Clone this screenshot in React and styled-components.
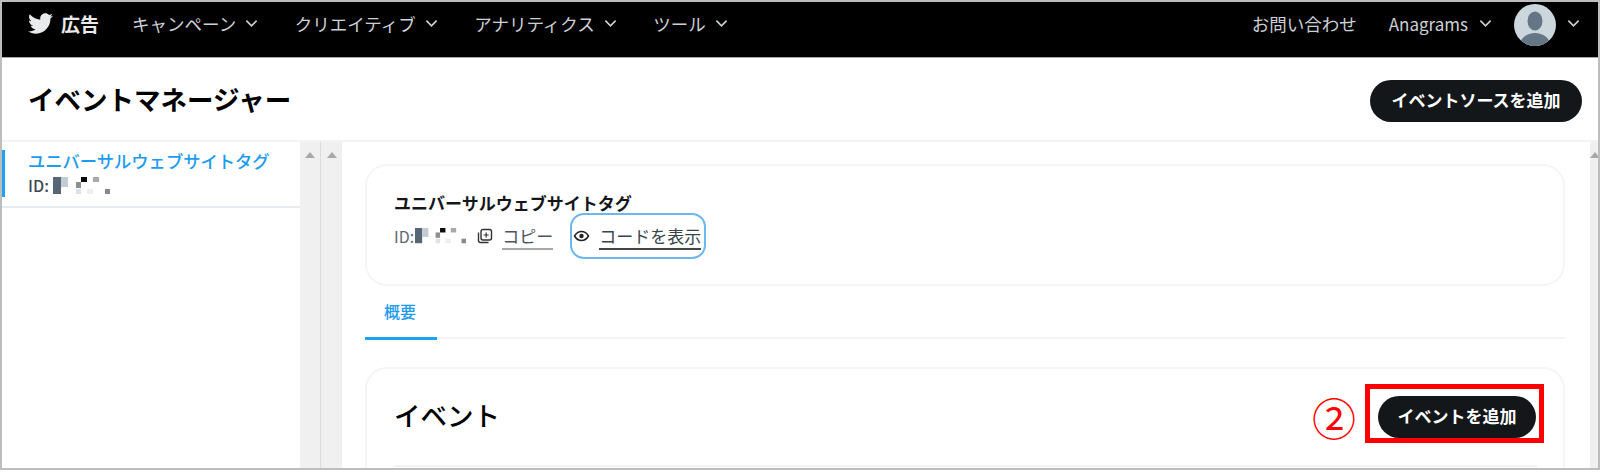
import React from 'react';
import styled, { createGlobalStyle } from 'styled-components';
import { FaTwitter } from 'react-icons/fa';

const GlobalStyle = createGlobalStyle`
  html, body {
    margin: 0;
    background: #fff;
  }
  * {
    box-sizing: border-box;
  }
`;

const Frame = styled.div`
  width: 1600px;
  height: 470px;
  border: 2px solid #bdbdbd;
  overflow: hidden;
  display: flex;
  flex-direction: column;
  font-family: "Noto Sans CJK JP", "Liberation Sans", sans-serif;
  color: #14171a;
`;

const TopBar = styled.header`
  flex: none;
  height: 56px;
  background: #000;
  border-bottom: 1px solid #a8a8a8;
  display: flex;
  justify-content: space-between;
  padding: 2px 18px 0 26px;
  color: #ccd1d5;
  font-size: 17.5px;
`;

const BarGroup = styled.div`
  display: flex;
  align-items: flex-start;
`;

const Brand = styled.div`
  display: flex;
  align-items: center;
  gap: 8px;
  height: 38px;
  margin-right: 33px;
  color: #e8eaec;
  font-size: 19px;
  font-weight: 700;
  svg {
    font-size: 25px;
  }
`;

const NavItem = styled.div`
  display: flex;
  align-items: center;
  height: 38px;
  gap: ${(p) => p.$inner ?? 9}px;
  margin-right: ${(p) => p.$gap ?? 36.5}px;
  font-size: ${(p) => p.$size || 17.5}px;
  white-space: nowrap;
`;

const Avatar = styled.svg`
  width: 42px;
  height: 42px;
  display: block;
  margin-right: 11px;
`;

const TitleRow = styled.div`
  flex: none;
  height: 84px;
  border-bottom: 2px solid #f1f3f4;
  display: flex;
  align-items: center;
  justify-content: space-between;
  padding: 4px 16px 0 26px;
`;

const PageTitle = styled.h1`
  margin: -6px 0 0;
  font-size: 26.5px;
  font-weight: 700;
  color: #000;
`;

const PillButton = styled.button`
  height: 42px;
  width: ${(p) => p.$width}px;
  border: 0;
  border-radius: 21px;
  padding: 0 0 4px;
  background: #14171a;
  color: #fff;
  font-family: inherit;
  font-size: 17px;
  font-weight: 700;
`;

const Body = styled.div`
  flex: 1;
  display: flex;
  min-height: 0;
`;

const Sidebar = styled.aside`
  flex: none;
  width: 298px;
  padding-top: 9px;
`;

const SideItem = styled.div`
  height: 47px;
  border-left: 3px solid #1da1f2;
  padding-left: 23px;
  line-height: 22px;
`;

const SideName = styled.div`
  margin-top: -1px;
  color: #1d9bf0;
  font-size: 17.3px;
  font-weight: 500;
`;

const IdLine = styled.div`
  display: flex;
  align-items: center;
  gap: ${(p) => p.$gap ?? 4}px;
  margin-top: ${(p) => p.$top || 0}px;
  font-size: ${(p) => p.$size || 16}px;
  font-weight: ${(p) => p.$weight || 500};
  color: ${(p) => p.$color || '#3d4a54'};
`;

const SideRule = styled.div`
  height: 2px;
  margin-top: 9px;
  background: #e6ecf0;
`;

const ScrollTrack = styled.div`
  flex: none;
  width: ${(p) => p.$width}px;
  background: #f0f0f0;
  border-right: ${(p) => (p.$rule ? '1px solid #dcdcdc' : '0')};
  display: flex;
  justify-content: center;
  padding-top: 10px;
`;

const UpArrow = styled.div`
  flex: none;
  width: 0;
  height: 0;
  border-left: 5px solid transparent;
  border-right: 5px solid transparent;
  border-bottom: 6px solid #a8a8a8;
`;

const Main = styled.main`
  flex: none;
  width: 1248px;
  padding: 22px 25px 0 23px;
`;

const Card = styled.section`
  border: 2px solid #f3f5f6;
  border-radius: 22px;
  padding: ${(p) => p.$pad};
  height: ${(p) => p.$height}px;
`;

const CardTitle = styled.div`
  font-size: 17px;
  font-weight: 700;
  line-height: 26px;
`;

const ActionRow = styled.div`
  display: flex;
  align-items: center;
  height: 46px;
  margin-top: -3px;
`;

const CopyIconSlot = styled.span`
  display: flex;
  margin-left: 11px;
`;

const CopyLink = styled.span`
  margin-left: 9px;
  font-size: 17px;
  color: #4a5560;
  border-bottom: 2px solid #a8a8a8;
  line-height: 25px;
`;

const FocusBox = styled.div`
  display: flex;
  align-items: center;
  height: 46px;
  margin-left: 17px;
  padding: 0 3px 0 1px;
  border: 2px solid #6cb8ee;
  border-radius: 14px;
`;

const ShowLink = styled.span`
  margin-left: 9px;
  font-size: 17px;
  color: #39434c;
  border-bottom: 2px solid #444;
  line-height: 25px;
`;

const TabBar = styled.div`
  height: 49px;
  margin-top: 4px;
  border-bottom: 2px solid #f3f5f6;
  display: flex;
`;

const Tab = styled.div`
  width: 72px;
  height: 50px;
  padding-left: 19px;
  line-height: 42px;
  font-size: 16px;
  font-weight: 500;
  color: #1d9bf0;
  border-bottom: 3px solid #1da1f2;
`;

const EventCard = styled(Card)`
  position: relative;
  margin-top: 28px;
`;

const EventHead = styled.div`
  display: flex;
  align-items: center;
  justify-content: space-between;
  height: 42px;
  padding-right: 1px;
`;

const EventTitle = styled.h2`
  margin: -6px 0 0;
  font-size: 26.5px;
  font-weight: 500;
  color: #000;
`;

const EventRule = styled.div`
  height: 2px;
  margin-top: 27px;
  background: #f1f3f4;
`;

const Highlight = styled.div`
  position: absolute;
  top: 15px;
  right: 19px;
  width: 179px;
  height: 59px;
  border: 5px solid #f00;
`;

const Step = styled.div`
  position: absolute;
  top: 26px;
  right: 208px;
  width: 42px;
  height: 44px;
  display: flex;
  align-items: center;
  justify-content: center;
  color: #f00;
  font-size: 44px;
  font-weight: 400;
  line-height: 1;
`;

const Chevron = () => (
  <svg width="13" height="9" viewBox="0 0 14 9" fill="none" stroke="currentColor" strokeWidth="1.8">
    <path d="M1.5 1.5 7 7l5.5-5.5" />
  </svg>
);

// 個人情報を隠しているモザイク
const MOSAIC = [
  [0, 0, 8, 17, '#566674'],
  [8, 0, 7, 10, '#c3ccd4'],
  [23, 5, 5, 6, '#8d8f93'],
  [28, 0, 6, 5, '#0a0a0a'],
  [40, 0, 6, 5, '#a8a8a8'],
  [23, 12, 5, 5, '#dfe1e3'],
  [34, 12, 6, 5, '#eceeef'],
  [52, 12, 5, 5, '#85898e'],
];

const Mosaic = ({ width }) => (
  <svg width={width} height={(width * 17) / 57} viewBox="0 0 57 17">
    {MOSAIC.map(([x, y, w, h, fill]) => (
      <rect key={`${x}-${y}`} x={x} y={y} width={w} height={h} fill={fill} />
    ))}
  </svg>
);

const CopyIcon = () => (
  <svg width="16" height="16" viewBox="0 0 16 16" fill="none" stroke="#333" strokeWidth="1.4">
    <rect x="4" y="1.5" width="10.5" height="10.5" rx="2" />
    <path d="M1.5 4.5v8a2 2 0 0 0 2 2h8" />
    <path d="M9.2 4.5v5M6.7 7h5" strokeWidth="1.2" />
  </svg>
);

const EyeIcon = () => (
  <svg width="17" height="12" viewBox="0 0 16 12" fill="none" stroke="#222" strokeWidth="1.5">
    <path d="M1 6c1.800-3 4-4.500 7-4.500S13.200 3 15 6c-1.800 3-4 4.500-7 4.500S2.800 9 1 6Z" />
    <circle cx="8" cy="6" r="2.200" fill="#222" stroke="none" />
  </svg>
);

const App = () => (
  <>
    <GlobalStyle />
    <Frame>
      <TopBar>
        <BarGroup>
          <Brand>
            <FaTwitter />
            広告
          </Brand>
          <NavItem>キャンペーン<Chevron /></NavItem>
          <NavItem>クリエイティブ<Chevron /></NavItem>
          <NavItem>アナリティクス<Chevron /></NavItem>
          <NavItem>ツール<Chevron /></NavItem>
        </BarGroup>
        <BarGroup>
          <NavItem $gap={32}>お問い合わせ</NavItem>
          <NavItem $gap={22} $inner={11} $size={17}>Anagrams<Chevron /></NavItem>
          <Avatar viewBox="0 0 42 42">
            <defs>
              <clipPath id="avatar-clip">
                <circle cx="21" cy="21" r="21" />
              </clipPath>
            </defs>
            <g clipPath="url(#avatar-clip)">
              <rect width="42" height="42" fill="#ccd6dd" />
              <ellipse cx="21" cy="17" rx="7.500" ry="9.500" fill="#657786" />
              <ellipse cx="21" cy="41" rx="15" ry="12" fill="#657786" />
            </g>
          </Avatar>
          <NavItem $gap={0}><Chevron /></NavItem>
        </BarGroup>
      </TopBar>
      <TitleRow>
        <PageTitle>イベントマネージャー</PageTitle>
        <PillButton $width={212}>イベントソースを追加</PillButton>
      </TitleRow>
      <Body>
        <Sidebar>
          <SideItem>
            <SideName>ユニバーサルウェブサイトタグ</SideName>
            <IdLine $top={2}>ID:<Mosaic width={57} /></IdLine>
          </SideItem>
          <SideRule />
        </Sidebar>
        <ScrollTrack $width={21} $rule><UpArrow /></ScrollTrack>
        <ScrollTrack $width={21}><UpArrow /></ScrollTrack>
        <Main>
          <Card $height={122} $pad="24px 26px 0 27px">
            <CardTitle>ユニバーサルウェブサイトタグ</CardTitle>
            <ActionRow>
              <IdLine $gap={1} $weight={400} $color="#5c6873" $size={16}>
                ID:<Mosaic width={51} />
              </IdLine>
              <CopyIconSlot><CopyIcon /></CopyIconSlot>
              <CopyLink>コピー</CopyLink>
              <FocusBox>
                <EyeIcon />
                <ShowLink>コードを表示</ShowLink>
              </FocusBox>
            </ActionRow>
          </Card>
          <TabBar>
            <Tab>概要</Tab>
          </TabBar>
          <EventCard $height={140} $pad="27px 26px 0 27px">
            <EventHead>
              <EventTitle>イベント</EventTitle>
              <PillButton $width={158}>イベントを追加</PillButton>
            </EventHead>
            <EventRule />
            <Step>②</Step>
            <Highlight />
          </EventCard>
        </Main>
        <ScrollTrack $width={9}><UpArrow /></ScrollTrack>
      </Body>
    </Frame>
  </>
);

export default App;
